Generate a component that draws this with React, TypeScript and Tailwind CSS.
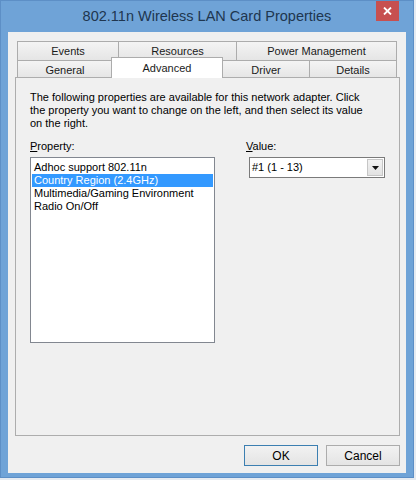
import { useState } from 'react';

const topTabs = [
    { label: 'Events', w: 'w-[102px]' },
    { label: 'Resources', w: 'w-[119px]' },
    { label: 'Power Management', w: 'w-[161px]' },
];

const properties = ['Adhoc support 802.11n', 'Country Region (2.4GHz)', 'Multimedia/Gaming Environment', 'Radio On/Off'];

function Tab({ label, className }: { label: string; className: string }) {
    return (
        <div
            className={`flex items-center justify-center border border-[#acacac] bg-gradient-to-b from-[#f4f4f4] to-[#e5e5e5] text-[#1a1a1a] ${className}`}
        >
            {label}
        </div>
    );
}

export default function App() {
    const [selected, setSelected] = useState(1);

    return (
        <div className="w-[416px] h-[480px] bg-[#e6ebf1] font-['Liberation_Sans',Arial,sans-serif] text-[11px] text-black">
            <div className="w-[414px] h-[478px] flex flex-col bg-[#6fa3d7] border border-[#5d8fc6]">
                {/* title bar */}
                <div className="relative h-[31px] flex items-center justify-center text-[14.5px] text-[#20364f]">
                    <span className="pt-[1px]">802.11n Wireless LAN Card Properties</span>
                    <div className="absolute right-[14px] top-0 w-[23px] h-[20px] bg-[#c75050] flex items-center justify-center">
                        <svg width="9" height="8" viewBox="0 0 9 8">
                            <path d="M1 0.5 L8 7.5 M8 0.5 L1 7.5" stroke="white" strokeWidth="1.8" />
                        </svg>
                    </div>
                </div>

                {/* client area */}
                <div className="mx-[7px] mb-[4px] flex-1 flex flex-col bg-[#f0f0f0]">
                    <div className="pt-[9px] pl-[9px]">
                        <div className="flex h-[20px]">
                            {topTabs.map((t, i) => (
                                <Tab key={t.label} label={t.label} className={`${t.w} h-[20px] pt-[1px] ${i > 0 ? '-ml-px' : ''}`} />
                            ))}
                        </div>
                        <div className="flex items-start h-[17px] -mt-px">
                            <Tab label="General" className="w-[96px] h-[18px] border-b-0 pt-[1px]" />
                            <div className="relative z-10 -ml-[2px] -mt-[3px] w-[112px] h-[21px] flex justify-center pt-[2px] bg-white border border-b-0 border-[#acacac] text-[#1a1a1a]">
                                Advanced
                            </div>
                            <Tab label="Driver" className="-ml-px w-[88px] h-[18px] border-b-0 pt-[1px]" />
                            <Tab label="Details" className="-ml-px w-[88px] h-[18px] border-b-0 pt-[1px]" />
                        </div>
                    </div>

                    {/* tab page */}
                    <div className="ml-[7px] w-[385px] h-[359px] border border-[#adadad] bg-[#f0f0f0] pl-[14px] pt-[13px]">
                        <p className="leading-[13px] w-[340px]">
                            The following properties are available for this network adapter. Click the property you want
                            to change on the left, and then select its value on the right.
                        </p>
                        <div className="flex mt-[10px]">
                            <div className="w-[216px]">
                                <div className="leading-[13px]">
                                    <span className="underline">P</span>roperty:
                                </div>
                                <div className="mt-[4px] w-[185px] h-[186px] border border-[#828790] bg-white p-[1px]">
                                    {properties.map((p, i) => (
                                        <div
                                            key={p}
                                            onClick={() => setSelected(i)}
                                            className={`h-[13px] leading-[13px] pl-[2px] ${i === 0 ? 'mt-[2px]' : ''} ${
                                                i === selected ? 'bg-[#3399ff] text-white' : ''
                                            }`}
                                        >
                                            {p}
                                        </div>
                                    ))}
                                </div>
                            </div>
                            <div>
                                <div className="leading-[13px]">
                                    <span className="underline">V</span>alue:
                                </div>
                                <div className="mt-[4px] ml-[3px] w-[136px] h-[21px] border border-[#7a7a7a] bg-white flex items-center justify-between">
                                    <span className="pl-[2px]">#1 (1 - 13)</span>
                                    <div className="w-[16px] h-[17px] mr-[1px] border border-[#c6c6c6] bg-gradient-to-b from-[#f2f2f2] to-[#e2e2e2] flex items-center justify-center">
                                        <svg width="7" height="4" viewBox="0 0 7 4">
                                            <path d="M0 0 H7 L3.5 4 Z" fill="#111" />
                                        </svg>
                                    </div>
                                </div>
                            </div>
                        </div>
                    </div>

                    {/* buttons */}
                    <div className="flex justify-end gap-[8px] mt-[9px] mr-[6px]">
                        <button className="w-[74px] h-[21px] border border-[#3c7fb1] bg-gradient-to-b from-[#f2f2f2] to-[#e4e4e4] text-[12px]">
                            OK
                        </button>
                        <button className="w-[74px] h-[21px] border border-[#acacac] bg-gradient-to-b from-[#f2f2f2] to-[#e4e4e4] text-[12px]">
                            Cancel
                        </button>
                    </div>
                </div>
            </div>
        </div>
    );
}
